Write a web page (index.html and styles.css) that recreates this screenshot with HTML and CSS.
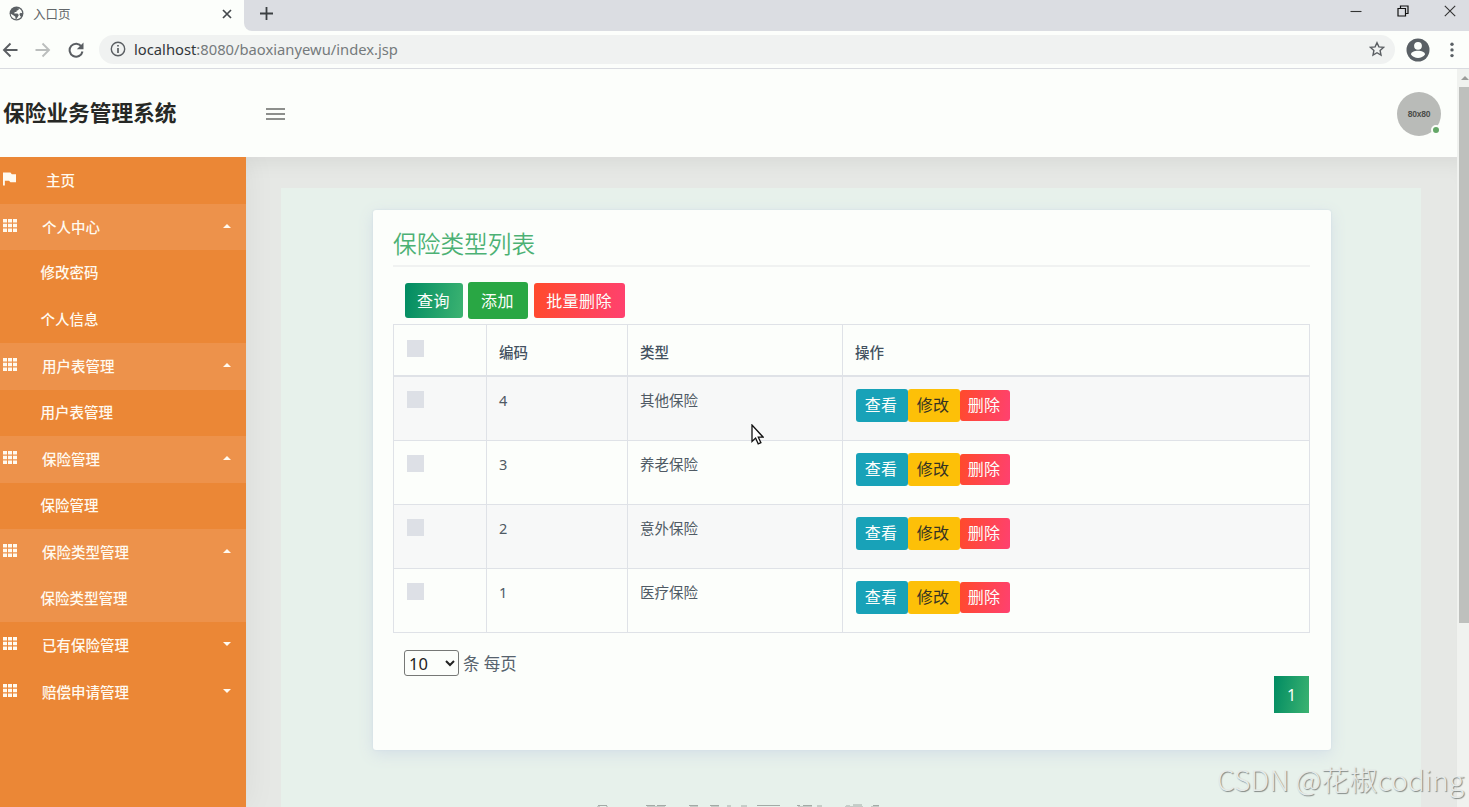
FILE: index.html
```html
<!DOCTYPE html>
<html lang="zh-CN">
<head>
<meta charset="utf-8">
<title>入口页</title>
<link rel="stylesheet" href="styles.css">
</head>
<body>
<svg class="defs" width="0" height="0">
  <symbol id="grid" viewBox="0 0 14 13"><path fill="#fffaf0" d="M0 0h4v3.500H0zM5 0h4v3.500H5zM10 0h4v3.500h-4zM0 4.800h4v3.500H0zM5 4.800h4v3.500H5zM10 4.800h4v3.500h-4zM0 9.500h4V13H0zM5 9.500h4V13H5zM10 9.500h4V13h-4z"/></symbol>
</svg>
<div class="tabs">
  <div class="tab">
    <svg class="globe" viewBox="0 0 16 16"><circle cx="8" cy="8" r="7.400" fill="#5b6064"/><path fill="#fcfefb" d="M8.500 2c2 0 2.300.4 2.300 1.300L9.500 4.500 8 5v1.500H6.200L5.500 8H9l1.500 1.500-1 2L8 13.800 6.800 13.500V11.500L5 10 1.900 8.200C1.800 9.500 2.500 12 5 13.400c3 1.500 6 .6 8-1.900L12 11l-1-2.500 1.500-1.300 1.600.5C14 5 12 2.300 8.500 2z"/></svg>
    <span class="tab-name">入口页</span>
    <svg class="tab-x" viewBox="0 0 10 10"><path d="M1 1l8 8M9 1L1 9" stroke="#44484c" stroke-width="1.700"/></svg>
  </div>
  <div class="strip">
    <svg class="plus" viewBox="0 0 13 13"><path d="M6.500 0v13M0 6.500h13" stroke="#3c4043" stroke-width="1.800"/></svg>
    <div class="window-buttons">
      <svg viewBox="0 0 12 12"><path d="M.5 6.500h11" stroke="#333" stroke-width="1.100"/></svg>
      <svg viewBox="0 0 12 12"><path d="M1 3.500h7.500V11H1zM3.500 3.500V1H11v7.500H8.500" fill="none" stroke="#111" stroke-width="1.200"/></svg>
      <svg viewBox="0 0 12 12"><path d="M.8.8l10.400 10.400M11.200.8L.8 11.200" stroke="#333" stroke-width="1.100"/></svg>
    </div>
  </div>
</div>
<div class="toolbar">
  <svg class="nav" viewBox="0 0 16 16"><path d="M15.500 8H2M8.500 1.500L2 8l6.500 6.500" fill="none" stroke="#5a5e62" stroke-width="1.900"/></svg>
  <svg class="nav" viewBox="0 0 16 16"><path d="M.5 8H14M7.500 1.500L14 8l-6.500 6.500" fill="none" stroke="#bbbebd" stroke-width="1.900"/></svg>
  <svg class="nav" viewBox="0 0 16 16"><path d="M13.500 4.500A6.500 6.500 0 1 0 14.500 9.500" fill="none" stroke="#5a5e62" stroke-width="2"/><path d="M15.500 .5v6.700H8.800z" fill="#5a5e62"/></svg>
  <div class="address">
    <svg class="info" viewBox="0 0 16 16"><circle cx="8" cy="8" r="6.700" fill="none" stroke="#5a5e62" stroke-width="1.400"/><path d="M8 7v5M8 4v1.600" stroke="#5a5e62" stroke-width="1.700"/></svg>
    <span class="url"><b>localhost</b>:8080/baoxianyewu/index.jsp</span>
    <svg class="star" viewBox="0 0 16 16"><path d="M8 1.700l1.900 4.200 4.600.5-3.400 3.100.9 4.500-4-2.300-4 2.300.9-4.500L1.500 6.400l4.600-.5z" fill="none" stroke="#5a5e62" stroke-width="1.400"/></svg>
  </div>
  <svg class="profile" viewBox="0 0 24 24"><circle cx="12" cy="12" r="11.500" fill="#5a6065"/><circle cx="12" cy="7.800" r="3.900" fill="#fcfefb"/><path d="M5 16.600c0-5 14-5 14 0-3 4.500-11 4.500-14 0z" fill="#fcfefb"/></svg>
  <svg class="dots" viewBox="0 0 4 16"><g fill="#5a6065"><circle cx="2" cy="2.200" r="1.700"/><circle cx="2" cy="7.900" r="1.700"/><circle cx="2" cy="13.600" r="1.700"/></g></svg>
</div>

<div class="viewport">
  <div class="page">
    <header class="header">
      <h1 class="brand">保险业务管理系统</h1>
      <div class="burger"><i></i><i></i><i></i></div>
      <div class="avatar">80x80<span class="online"></span></div>
    </header>
    <div class="body">
      <nav class="sidebar">
        <div class="item home"><svg class="flag" viewBox="0 0 14 14"><path fill="#fffaf0" d="M0 0h8l1.500 2H14v8.500H8L6.500 9H2v5H0z"/></svg><span>主页</span></div>
        <div class="item lit"><svg class="ico"><use href="#grid"/></svg><span>个人中心</span><i class="caret up"></i></div>
        <div class="item sub"><span>修改密码</span></div>
        <div class="item sub"><span>个人信息</span></div>
        <div class="item lit"><svg class="ico"><use href="#grid"/></svg><span>用户表管理</span><i class="caret up"></i></div>
        <div class="item sub"><span>用户表管理</span></div>
        <div class="item lit"><svg class="ico"><use href="#grid"/></svg><span>保险管理</span><i class="caret up"></i></div>
        <div class="item sub"><span>保险管理</span></div>
        <div class="item lit"><svg class="ico"><use href="#grid"/></svg><span>保险类型管理</span><i class="caret up"></i></div>
        <div class="item sub lit"><span>保险类型管理</span></div>
        <div class="item"><svg class="ico"><use href="#grid"/></svg><span>已有保险管理</span><i class="caret"></i></div>
        <div class="item"><svg class="ico"><use href="#grid"/></svg><span>赔偿申请管理</span><i class="caret"></i></div>
      </nav>
      <main class="main">
        <div class="panel">
          <section class="card">
            <h2 class="title">保险类型列表</h2>
            <div class="actions">
              <button class="btn query">查询</button>
              <button class="btn add">添加</button>
              <button class="btn remove">批量删除</button>
            </div>
            <table class="table">
              <colgroup><col class="c1"><col class="c2"><col class="c3"><col></colgroup>
              <thead><tr><th><i class="check"></i></th><th>编码</th><th>类型</th><th>操作</th></tr></thead>
              <tbody>
                <tr><td><i class="check"></i></td><td>4</td><td>其他保险</td><td><div class="ops"><button class="op view">查看</button><button class="op edit">修改</button><button class="op del">删除</button></div></td></tr>
                <tr><td><i class="check"></i></td><td>3</td><td>养老保险</td><td><div class="ops"><button class="op view">查看</button><button class="op edit">修改</button><button class="op del">删除</button></div></td></tr>
                <tr><td><i class="check"></i></td><td>2</td><td>意外保险</td><td><div class="ops"><button class="op view">查看</button><button class="op edit">修改</button><button class="op del">删除</button></div></td></tr>
                <tr><td><i class="check"></i></td><td>1</td><td>医疗保险</td><td><div class="ops"><button class="op view">查看</button><button class="op edit">修改</button><button class="op del">删除</button></div></td></tr>
              </tbody>
            </table>
            <div class="size"><select class="select"><option>10</option></select><span>条 每页</span></div>
            <div class="pager"><button class="current">1</button></div>
          </section>
          <svg class="footer" viewBox="0 0 290 3"><path d="M3 1.500h9M51 1.500h9M62 1.500h9M94 1.500h9M115 1.500h9M132 2h4M146 2h6M162 1.500h23M202 1.500h3M208 1.500h9M222 2h5M251 2h4M258 1h9M278 1.500h6" stroke="#a3aaa6" stroke-width="1"/><path d="M2 2.500h3M11 2.500h2M52 2.500h18M95 2.500h8M116 2.500h8M203 2.500h14M250 2.500h18M276 2.500h8" stroke="#c4ccc7" stroke-width="1"/></svg>
        </div>
      </main>
    </div>
  </div>
  <div class="scrollbar"><i class="arrow"></i><div class="thumb"></div></div>
</div>
<svg class="cursor" viewBox="0 0 13 21"><path d="M1 1v16.500l3.600-3.400 2.600 5.700 2.700-1.200-2.600-5.400h4.900z" fill="#fff" stroke="#111" stroke-width="1.300"/></svg>
<div class="watermark">CSDN @花椒coding</div>
</body>
</html>
```

FILE: styles.css
```css
* { box-sizing: border-box; }
body {
  margin: 0;
  width: 1469px;
  height: 807px;
  overflow: hidden;
  position: relative;
  display: flex;
  flex-direction: column;
  background: #fcfefb;
  font-family: "Noto Sans", "Noto Sans CJK SC", sans-serif;
}
button { border: 0; padding: 0; font: inherit; }
svg, i { flex: none; }
.defs { position: absolute; }

.tabs { display: flex; height: 31px; flex: none; background: #fcfefb; }
.tab { display: flex; align-items: center; width: 244px; height: 31px; padding: 0 12px 4px 9px; }
.strip { display: flex; flex: 1; align-items: center; background: #dbdde2; border-bottom-left-radius: 8px; }
.globe { width: 15px; height: 15px; }
.tab-name { margin-left: 9px; flex: 1; font-size: 12.5px; color: #62676a; }
.tab-x { width: 10px; height: 10px; }
.plus { width: 13px; height: 13px; margin: 0 0 4px 16px; }
.window-buttons { display: flex; gap: 35px; margin: 0 13px 10px auto; }
.window-buttons svg { width: 12px; height: 12px; }

.toolbar { display: flex; align-items: center; height: 38px; flex: none; padding-left: 2px; border-bottom: 1px solid #d9dbe0; }
.nav { width: 16px; height: 16px; margin-right: 17px; }
.address { display: flex; align-items: center; width: 1296px; height: 29px; margin-left: -2px; padding: 0 10px 1px 11px; border-radius: 15px; background: #f0f2f1; }
.info { width: 16px; height: 16px; }
.url { margin: -1px 0 0 8px; flex: 1; font-size: 14.750px; color: #757a7c; }
.url b { font-weight: 400; color: #33373a; }
.star { width: 16px; height: 16px; }
.profile { width: 24px; height: 24px; margin-left: 11px; }
.dots { width: 4px; height: 16px; margin-left: 20px; }

.viewport { display: flex; flex: 1; min-height: 0; }
.page { display: flex; flex-direction: column; width: 1457px; min-height: 0; overflow: hidden; }
.header { display: flex; align-items: center; flex: none; height: 88px; padding: 0 16px 0 3px; background: #fcfefb; position: relative; }
.brand { margin: 0; width: 263px; font-size: 21.700px; line-height: 30px; color: #262825; }
.burger { display: flex; flex-direction: column; gap: 3px; width: 19px; margin-top: 1px; }
.burger i { height: 2px; background: #8d8f8c; }
.avatar { position: relative; display: grid; place-items: center; width: 44px; height: 44px; margin: 2px 0 0 auto; border-radius: 50%; background: #b9bbb8; font: bold 8.500px "Liberation Sans", sans-serif; letter-spacing: -.2px; color: #4b4d4a; }
.online { position: absolute; right: 0; bottom: 1px; width: 10px; height: 10px; border: 2px solid #fcfefb; border-radius: 50%; background: #64a767; }

.body { display: flex; flex: 1; min-height: 0; position: relative; }
.sidebar { width: 246px; flex: none; background: #eb8736; color: #fffaf0; font-size: 14.500px; box-shadow: 3px 0 28px rgba(0, 0, 0, .05); position: relative; clip-path: inset(0 -40px 0 0); }
.item { display: flex; align-items: center; height: 46.5px; padding-left: 3px; }
.item span { margin: 0 0 0 26px; flex: 1; line-height: 20px; font-weight: 500; }
.home span { margin-left: 30px; }
.item.sub span { margin: -2px 0 0 37.5px; }
.lit { background: #ed924b; }
.ico { width: 14px; height: 13px; margin: -3px -1px 0 0; }
.flag { width: 13px; height: 14px; margin-top: -2px; }
.caret { margin: -2px 15px 0 0; border: 4px solid transparent; border-top-color: #fffaf0; border-bottom: 0; }
.caret.up { border-top: 0; border-bottom: 4px solid #fffaf0; }

.main { display: flex; flex: 1; padding: 31px 36px 0 35px; background: #e6e8e5; box-shadow: inset 0 20px 20px -14px rgba(0, 0, 0, .06); }
.panel { display: flex; flex-direction: column; width: 1140px; padding: 22px 90px 0 92px; background: #e7f1eb; }
.card { display: flex; flex-direction: column; width: 958px; height: 540px; flex: none; padding: 19px 21px 0 20px; border-radius: 3px; background: #fcfefb; box-shadow: 0 4px 16px #d3dee6, 0 0 2px #cbd9e3; }
.title { margin: 0; width: 917px; height: 38px; border-bottom: 2px solid #f0f2f1; font-family: "Noto Sans CJK SC", sans-serif; font-size: 23.700px; font-weight: 350; line-height: 29px; color: #4cb174; }
.actions { display: flex; align-items: center; gap: 6px; margin: 15px 0 5px 12px; height: 37px; }
.btn { height: 35px; padding: 0 1px 2px 0; border-radius: 3px; color: #fcfefb; font-size: 16px; letter-spacing: .4px; }
.query { width: 58px; margin-right: -1px; background: linear-gradient(100deg, #008b62, #3cb371); }
.add { width: 60px; height: 37px; background: #29a744; }
.remove { width: 91px; background: linear-gradient(100deg, #ff4a2b, #ff4170); }
.table { width: 917px; table-layout: fixed; border-collapse: collapse; font-size: 14.500px; color: #4f5a64; }
.c1 { width: 93px; }
.c2 { width: 141px; }
.c3 { width: 215px; }
th, td { padding: 0 12px; border: 1px solid #dfe2e7; text-align: left; vertical-align: top; }
th { height: 51px; padding-top: 17px; border-bottom-width: 2px; line-height: 20px; font-weight: 500; color: #435160; }
td { height: 64px; padding-top: 13px; line-height: 21px; }
tbody tr:first-child td { height: 65px; }
tbody tr:nth-child(odd) { background: #f7f8f8; }
.check { display: block; width: 17px; height: 17px; margin: 1px 0 0 1px; background: #dde0e6; }
th .check { margin-top: -2px; }
.ops { display: flex; align-items: center; height: 33px; margin: -1px 0 0 1px; }
.op { padding: 0 2px 0 0; font-size: 16px; letter-spacing: .3px; color: #fcfefb; border-radius: 3px; }
.view, .edit { width: 52px; height: 33px; }
.view { background: #18a2b8; }
.op.edit { background: #fdc008; color: #353323; }
.del { width: 50px; height: 31px; background: linear-gradient(100deg, #ff4a2b, #ff4170); }
.size { display: flex; align-items: center; gap: 4px; height: 26px; margin: 17px 0 0 11px; font-size: 16.500px; color: #56626d; }
.select { width: 55px; height: 26px; padding: 0; border: 1px solid #767876; border-radius: 3px; background: #fcfefb; font: 16.500px "Noto Sans", sans-serif; color: #222; }
.pager { display: flex; justify-content: flex-end; margin: 0 1px 0 0; }
.current { width: 35px; height: 37px; background: linear-gradient(100deg, #008b62, #3cb371); color: #fcfefb; font-size: 16px; }
.footer { width: 290px; height: 3px; margin: 54px 0 0 222px; }

.scrollbar { display: flex; flex-direction: column; align-items: flex-end; width: 12px; background: #f0f2ef; }
.arrow { margin: 7px 0 7px 0; border: 4px solid transparent; border-top: 0; border-bottom: 4px solid #9b9d9a; }
.thumb { width: 10px; height: 536px; background: #bec0bd; }

.cursor { position: absolute; left: 751px; top: 424px; width: 13px; height: 21px; }
.watermark { position: absolute; left: 1217px; top: 759px; font: 300 28.200px/40px "Noto Sans CJK SC", sans-serif; white-space: nowrap; color: #e6eae8; text-shadow: 1px 1px 1px #818784; }
```
